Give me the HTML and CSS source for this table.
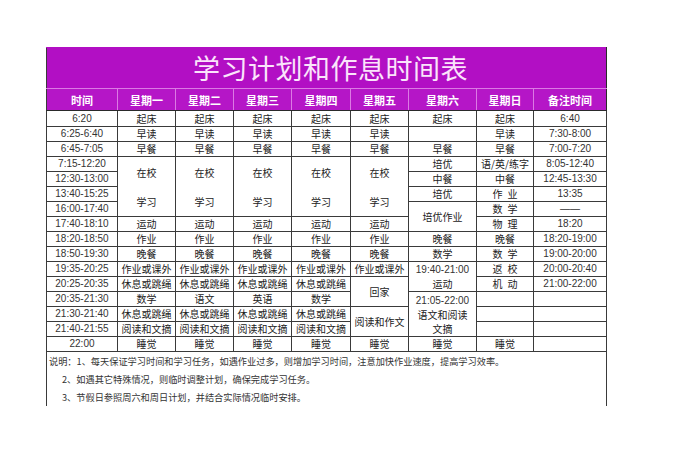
FILE: index.html
```html
<!DOCTYPE html>
<html lang="zh-CN">
<head>
<meta charset="utf-8">
<title>学习计划和作息时间表</title>
<link rel="stylesheet" href="styles.css">
</head>
<body>
<div class="page">
<table class="sheet">
  <colgroup>
    <col class="c-time"><col class="c-d"><col class="c-d"><col class="c-d"><col class="c-d4"><col class="c-d"><col class="c-sat"><col class="c-sun"><col class="c-note">
  </colgroup>
  <tr class="title-row"><td colspan="9" class="title">学习计划和作息时间表</td></tr>
  <tr class="head-row">
    <th>时间</th><th>星期一</th><th>星期二</th><th>星期三</th><th>星期四</th><th>星期五</th><th>星期六</th><th>星期日</th><th>备注时间</th>
  </tr>
  <tr class="first"><td class="t">6:20</td><td>起床</td><td>起床</td><td>起床</td><td>起床</td><td>起床</td><td>起床</td><td>起床</td><td class="t">6:40</td></tr>
  <tr><td class="t">6:25-6:40</td><td>早读</td><td>早读</td><td>早读</td><td>早读</td><td>早读</td><td></td><td>早读</td><td class="t">7:30-8:00</td></tr>
  <tr><td class="t">6:45-7:05</td><td>早餐</td><td>早餐</td><td>早餐</td><td>早餐</td><td>早餐</td><td>早餐</td><td>早餐</td><td class="t">7:00-7:20</td></tr>
  <tr><td class="t">7:15-12:20</td>
    <td rowspan="4"><div class="lines wide">在校<br>学习</div></td>
    <td rowspan="4"><div class="lines wide">在校<br>学习</div></td>
    <td rowspan="4"><div class="lines wide">在校<br>学习</div></td>
    <td rowspan="4"><div class="lines wide">在校<br>学习</div></td>
    <td rowspan="4"><div class="lines wide">在校<br>学习</div></td>
    <td>培优</td><td>语/英/练字</td><td class="t">8:05-12:40</td></tr>
  <tr><td class="t">12:30-13:00</td><td>中餐</td><td>中餐</td><td class="t">12:45-13:30</td></tr>
  <tr><td class="t">13:40-15:25</td><td>培优</td><td>作&ensp;业</td><td class="t">13:35</td></tr>
  <tr><td class="t">16:00-17:40</td><td rowspan="2">培优作业</td><td>数&ensp;学</td><td class="t">——</td></tr>
  <tr><td class="t">17:40-18:10</td><td>运动</td><td>运动</td><td>运动</td><td>运动</td><td>运动</td><td>物&ensp;理</td><td class="t">18:20</td></tr>
  <tr><td class="t">18:20-18:50</td><td>作业</td><td>作业</td><td>作业</td><td>作业</td><td>作业</td><td>晚餐</td><td>晚餐</td><td class="t">18:20-19:00</td></tr>
  <tr><td class="t">18:50-19:30</td><td>晚餐</td><td>晚餐</td><td>晚餐</td><td>晚餐</td><td>晚餐</td><td>数学</td><td>数&ensp;学</td><td class="t">19:00-20:00</td></tr>
  <tr><td class="t">19:35-20:25</td><td>作业或课外</td><td>作业或课外</td><td>作业或课外</td><td>作业或课外</td><td>作业或课外</td>
    <td rowspan="2"><div class="lines"><span class="t">19:40-21:00</span><br>运动</div></td>
    <td>返&ensp;校</td><td class="t">20:00-20:40</td></tr>
  <tr><td class="t">20:25-20:35</td><td>休息或跳绳</td><td>休息或跳绳</td><td>休息或跳绳</td><td>休息或跳绳</td><td rowspan="2">回家</td><td>机&ensp;动</td><td class="t">21:00-22:00</td></tr>
  <tr><td class="t">20:35-21:30</td><td>数学</td><td>语文</td><td>英语</td><td>数学</td>
    <td rowspan="3"><div class="lines"><span class="t">21:05-22:00</span><br>语文和阅读<br>文摘</div></td>
    <td></td><td></td></tr>
  <tr><td class="t">21:30-21:40</td><td>休息或跳绳</td><td>休息或跳绳</td><td>休息或跳绳</td><td>休息或跳绳</td><td rowspan="2">阅读和作文</td><td></td><td></td></tr>
  <tr><td class="t">21:40-21:55</td><td>阅读和文摘</td><td>阅读和文摘</td><td>阅读和文摘</td><td>阅读和文摘</td><td></td><td></td></tr>
  <tr><td class="t">22:00</td><td>睡觉</td><td>睡觉</td><td>睡觉</td><td>睡觉</td><td>睡觉</td><td>睡觉</td><td>睡觉</td><td></td></tr>
  <tr class="notes-row"><td colspan="9" class="notes">
    <div class="note">说明：1、每天保证学习时间和学习任务，如遇作业过多，则增加学习时间，注意加快作业速度，提高学习效率。</div>
    <div class="note indent">2、如遇其它特殊情况，则临时调整计划，确保完成学习任务。</div>
    <div class="note indent">3、节假日参照周六和周日计划，并结合实际情况临时安排。</div>
  </td></tr>
</table>
</div>
</body>
</html>
```

FILE: styles.css
```css
html, body {
  margin: 0;
  padding: 0;
  background: #ffffff;
}
.page {
  padding: 47px 0 0 46px;
}
.sheet {
  border-collapse: collapse;
  table-layout: fixed;
  width: 561px;
  font-family: "Noto Sans CJK SC", "Noto Sans", sans-serif;
  font-size: 10px;
  color: #222;
}
.c-time { width: 71px; }
.c-d { width: 58px; }
.c-d4 { width: 59px; }
.c-sat { width: 68px; }
.c-sun { width: 57px; }
.c-note { width: 73px; }

.sheet td, .sheet th {
  border: 1px solid #3a3a3a;
  padding: 0;
  text-align: center;
  vertical-align: middle;
  line-height: 12px;
  white-space: nowrap;
  overflow: hidden;
}
.sheet tr { height: 15px; }
.sheet tr.first { height: 16px; }

.sheet tr.title-row { height: 41px; }
.sheet td.title {
  background: #b20fc4;
  color: #fbe4fb;
  font-size: 27px;
  font-weight: 400;
  letter-spacing: 0.5px;
  line-height: 38px;
  border-top: 1px solid #b20fc4;
  border-right: 1px solid #2a2a2a;
  border-bottom: 1px solid #dc7ae4;
  padding-left: 8px;
}
.sheet tr.head-row { height: 22px; }
.sheet th {
  background: #b516c7;
  color: #ffffff;
  font-size: 11px;
  font-weight: 700;
  border-top: 1px solid #dc7ae4;
  border-left: 1px solid #dc7ae4;
  border-right: 1px solid #dc7ae4;
  border-bottom: 1px solid #2a2a2a;
}
.sheet th:first-child { border-left: 1px solid #3a3a3a; }
.sheet th:last-child { border-right: 1px solid #2a2a2a; }

.t {
  font-family: "Liberation Sans", "DejaVu Sans", sans-serif;
  font-size: 10px;
  color: #333;
}
.lines {
  line-height: 14px;
}
.lines.wide {
  line-height: 29px;
}
.sheet tr.notes-row { height: 54px; }
.sheet td.notes {
  text-align: left;
  vertical-align: top;
  border-bottom: none;
  padding: 0 0 0 2px;
  font-size: 9.2px;
  color: #333;
}
.note {
  line-height: 18px;
}
.note.indent {
  padding-left: 13px;
}
```
